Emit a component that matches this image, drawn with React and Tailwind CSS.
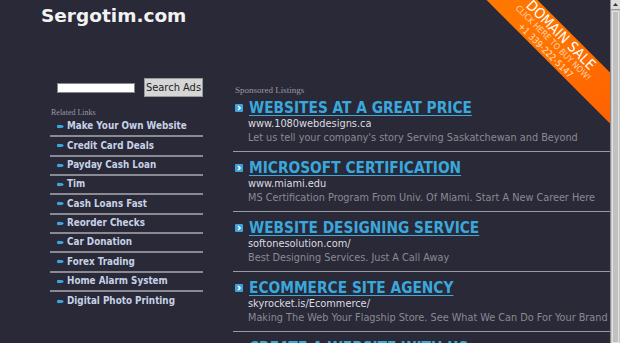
import React from 'react'

const COND = { fontFamily: '"DejaVu Sans Condensed", "DejaVu Sans", sans-serif', fontStretch: 'condensed' }

const RELATED = [
  'Make Your Own Website',
  'Credit Card Deals',
  'Payday Cash Loan',
  'Tim',
  'Cash Loans Fast',
  'Reorder Checks',
  'Car Donation',
  'Forex Trading',
  'Home Alarm System',
  'Digital Photo Printing',
]

const LISTINGS = [
  {
    title: 'WEBSITES AT A GREAT PRICE',
    url: 'www.1080webdesigns.ca',
    desc: "Let us tell your company's story Serving Saskatchewan and Beyond",
  },
  {
    title: 'MICROSOFT CERTIFICATION',
    url: 'www.miami.edu',
    desc: 'MS Certification Program From Univ. Of Miami. Start A New Career Here',
  },
  {
    title: 'WEBSITE DESIGNING SERVICE',
    url: 'softonesolution.com/',
    desc: 'Best Designing Services. Just A Call Away',
  },
  {
    title: 'ECOMMERCE SITE AGENCY',
    url: 'skyrocket.is/Ecommerce/',
    desc: 'Making The Web Your Flagship Store. See What We Can Do For Your Brand',
  },
  {
    title: 'CREATE A WEBSITE WITH US',
    url: 'www.example-sites.com',
    desc: 'Build Your Website Today',
  },
]

function LinkBullet() {
  return (
    <svg width="7" height="5" viewBox="0 0 7 5" className="shrink-0">
      <path d="M0 1.5 Q1 0.5 3 1 L5 1 L7 2.5 L5 4 L3 4 Q1 4.5 0 3.5 Z" fill="#3ca4dc" />
    </svg>
  )
}

function AdBullet() {
  return (
    <svg width="8" height="8" viewBox="0 0 8 8" className="shrink-0">
      <rect x="0" y="0" width="8" height="8" rx="1" fill="#3ea3d9" />
      <path d="M3 2 L5.2 4 L3 6" stroke="#fff" strokeWidth="1.4" fill="none" />
    </svg>
  )
}

// ---------------------------------------------------------------------------
// Corner ribbon
// ---------------------------------------------------------------------------
function Ribbon() {
  return (
    <div className="pointer-events-none absolute inset-0 overflow-hidden">
      <div
        className="absolute left-[424px] top-[24px] flex h-[36px] w-[260px] rotate-45 flex-col items-center justify-center bg-gradient-to-r from-[#ff7a00] via-[#ff7300] to-[#ff5a00] text-white"
        style={COND}
      >
        <div className="text-[14.5px] leading-[14px]">DOMAIN SALE</div>
        <div className="text-[8.6px] leading-[9px] text-[#ffd2a8]">CLICK HERE TO BUY NOW!</div>
        <div className="text-[9.2px] leading-[11px] text-[#ffe0c2]">+1 339-222-5147</div>
      </div>
    </div>
  )
}

export default function App() {
  return (
    <div className="flex h-[343px] w-[620px] overflow-hidden bg-[#292937]">
      <div className="relative flex-1 overflow-hidden">
        <h1
          className="pl-[41px] pt-[5px] text-[18.5px] font-bold leading-[22px] text-[#f2f2f2]"
          style={{ fontFamily: '"DejaVu Sans", sans-serif' }}
        >
          Sergotim.com
        </h1>

        <div className="mt-[51px] flex">
          {/* Left column */}
          <div className="ml-[50px] w-[153px]">
            <div className="flex h-[19px] items-center">
              <input
                type="text"
                className="ml-[7px] h-[10px] w-[78px] border border-[#888] bg-white"
              />
              <button
                className="ml-[9px] h-[19px] w-[62px] border border-[#999] bg-[#d6d6d6] text-[11px] leading-[17px] text-[#222]"
                style={COND}
              >
                Search Ads
              </button>
            </div>
            <div
              className="mt-[11px] pl-[1px] text-[8px] leading-[10px] text-[#9a9aa6]"
              style={{ fontFamily: '"Liberation Serif", serif' }}
            >
              Related Links
            </div>
            <ul>
              {RELATED.map((item, i) => (
                <li
                  key={item}
                  className={`flex h-[19.33px] items-center gap-[3px] pl-[7px] ${
                    i < RELATED.length - 1 ? 'border-b-2 border-[#8a8a94]' : ''
                  }`}
                >
                  <LinkBullet />
                  <span className="text-[9.8px] font-bold text-[#c6d1e6]" style={COND}>
                    {item}
                  </span>
                </li>
              ))}
            </ul>
          </div>

          {/* Sponsored listings */}
          <div className="ml-[30px] flex-1">
            <div
              className="mt-[7px] pl-[2px] text-[9px] leading-[10px] text-[#9a9aa6]"
              style={{ fontFamily: '"Liberation Serif", serif' }}
            >
              Sponsored Listings
            </div>
            {LISTINGS.map((ad, i) => (
              <div
                key={ad.title}
                className={`border-b border-[#9a9aa2] pb-[6px] ${i === 0 ? 'pt-[4.5px]' : 'pt-[7.5px]'}`}
              >
                <div className="flex h-[17px] items-center">
                  <div className="ml-[2px] mr-[6px]">
                    <AdBullet />
                  </div>
                  <span
                    className="whitespace-nowrap text-[15.3px] font-bold leading-[17px] text-[#3aa8dc] underline underline-offset-2"
                    style={COND}
                  >
                    {ad.title}
                  </span>
                </div>
                <div
                  className="mt-[0.5px] h-[14px] whitespace-nowrap pl-[15px] text-[10.9px] leading-[14px] text-[#dcdce2]"
                  style={COND}
                >
                  {ad.url}
                </div>
                <div
                  className="h-[14px] whitespace-nowrap pl-[15px] text-[10.8px] leading-[14px] text-[#8a8a94]"
                  style={COND}
                >
                  {ad.desc}
                </div>
              </div>
            ))}
          </div>
        </div>

        <Ribbon />
      </div>

      {/* Scrollbar */}
      <div className="flex w-[10px] flex-col border-l border-[#8a8a8a] bg-[#c6c6c6]">
        <div className="flex h-[10px] items-center justify-center border-b border-[#9a9a9a] bg-[#dcdcdc]">
          <svg width="5" height="3" viewBox="0 0 5 3">
            <path d="M0 3 L2.5 0 L5 3 Z" fill="#333" />
          </svg>
        </div>
        <div className="mx-[1px] mt-[1px] flex-1 border border-[#e2e2e2] bg-[#c0c0c0]" />
      </div>
    </div>
  )
}
